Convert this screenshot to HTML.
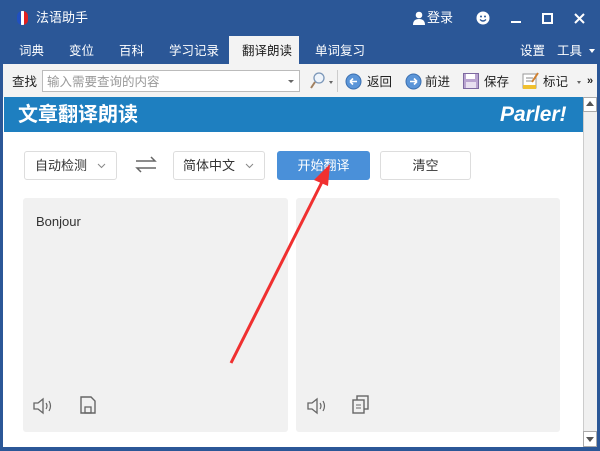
<!DOCTYPE html>
<html><head><meta charset="utf-8"><style>
*{margin:0;padding:0;box-sizing:border-box}
body{width:600px;height:451px;overflow:hidden;background:#2b5797;font-family:"Liberation Sans","Noto Sans CJK SC",sans-serif;position:relative}
.a{position:absolute}
.t{color:#fff;font-size:13px;line-height:16px}
.tab{position:absolute;top:38px;height:26px;line-height:26px;color:#fff;font-size:12.5px}
.tb{font-size:12.5px;color:#222;line-height:16px}
.btn{position:absolute;top:151px;height:29px;border:1px solid #ddd;border-radius:3px;background:#fff;font-size:13px;color:#333;line-height:27px}
.panel{position:absolute;top:198px;height:234px;background:#f1f1f1;border-radius:3px}
.chev{position:absolute;right:10px;top:11px}
</style></head><body>
<!-- title -->
<div class="a" style="left:17px;top:11px;width:11px;height:14px;border-radius:5px;overflow:hidden;display:flex"><div style="flex:1;background:#2050c0"></div><div style="flex:1;background:#fff"></div><div style="flex:1;background:#e02020"></div></div>
<div class="a t" style="left:36px;top:10px">法语助手</div>
<svg class="a" style="left:412px;top:11px" width="14" height="14"><circle cx="7" cy="4" r="3.3" fill="#fff"/><path d="M1 14 Q1 8 7 8 Q13 8 13 14Z" fill="#fff"/></svg>
<div class="a t" style="left:427px;top:10px">登录</div>
<svg class="a" style="left:476px;top:11px" width="14" height="14"><circle cx="7" cy="7" r="6.5" fill="#fff"/><circle cx="5" cy="5.5" r="1" fill="#2b5797"/><circle cx="9" cy="5.5" r="1" fill="#2b5797"/><path d="M4 8.5 Q7 11.5 10 8.5" stroke="#2b5797" stroke-width="1.3" fill="none"/></svg>
<div class="a" style="left:511px;top:21px;width:10px;height:2px;background:#fff"></div>
<div class="a" style="left:542px;top:13px;width:11px;height:11px;border:2px solid #fff"></div>
<svg class="a" style="left:574px;top:13px" width="11" height="11"><path d="M1 1L10 10M10 1L1 10" stroke="#fff" stroke-width="2"/></svg>
<!-- tabs -->
<div class="tab" style="left:19px">词典</div>
<div class="tab" style="left:69px">变位</div>
<div class="tab" style="left:119px">百科</div>
<div class="tab" style="left:169px">学习记录</div>
<div class="a" style="left:229px;top:36px;width:70px;height:30px;background:#f3f3f3"></div>
<div class="tab" style="left:242px;color:#222">翻译朗读</div>
<div class="tab" style="left:315px">单词复习</div>
<div class="tab" style="left:520px">设置</div>
<div class="tab" style="left:557px">工具</div>
<div class="a" style="left:589px;top:49px;border:3px solid transparent;border-top:4px solid #fff"></div>
<!-- toolbar -->
<div class="a" style="left:3px;top:64px;width:594px;height:33px;background:#f3f3f3"></div>
<div class="a tb" style="left:12px;top:74px">查找</div>
<div class="a" style="left:42px;top:70px;width:258px;height:22px;background:#fff;border:1px solid #bbb"></div>
<div class="a" style="left:47px;top:74px;font-size:12.5px;line-height:16px;color:#999">输入需要查询的内容</div>
<div class="a" style="left:288px;top:80px;border:3px solid transparent;border-top:3px solid #666"></div>
<svg class="a" style="left:310px;top:72px" width="16" height="18"><circle cx="9" cy="6" r="5" fill="#eef4fb" stroke="#7a96b8" stroke-width="1.3"/><path d="M5 10L1 16" stroke="#a08060" stroke-width="2"/></svg>
<div class="a" style="left:329px;top:81px;border:2.5px solid transparent;border-top:3px solid #666"></div>
<div class="a" style="left:337px;top:70px;width:1px;height:22px;background:#ccc"></div>
<svg class="a" style="left:345px;top:73px" width="17" height="17"><circle cx="8.5" cy="8.5" r="7.5" fill="#5b95d8" stroke="#3a6fb0"/><path d="M5 8.5H12M5 8.5L8 5.5M5 8.5L8 11.5" stroke="#fff" stroke-width="1.6" fill="none"/></svg>
<div class="a tb" style="left:367px;top:74px">返回</div>
<svg class="a" style="left:405px;top:73px" width="17" height="17"><circle cx="8.5" cy="8.5" r="7.5" fill="#5b95d8" stroke="#3a6fb0"/><path d="M5 8.5H12M12 8.5L9 5.5M12 8.5L9 11.5" stroke="#fff" stroke-width="1.6" fill="none"/></svg>
<div class="a tb" style="left:425px;top:74px">前进</div>
<svg class="a" style="left:463px;top:73px" width="16" height="16"><rect x="0.5" y="0.5" width="15" height="15" fill="#b9a4d0" stroke="#7d69a0"/><rect x="3" y="1" width="9" height="5" fill="#fff"/><rect x="3" y="9" width="10" height="6" fill="#e8e0f0"/></svg>
<div class="a tb" style="left:484px;top:74px">保存</div>
<svg class="a" style="left:522px;top:72px" width="18" height="18"><rect x="1" y="2" width="13" height="14" fill="#fff" stroke="#999"/><rect x="1" y="13" width="13" height="4" fill="#f0c030"/><path d="M4 6H11M4 9H10" stroke="#888"/><path d="M16 1L10 10" stroke="#d08030" stroke-width="2"/></svg>
<div class="a tb" style="left:543px;top:74px">标记</div>
<div class="a" style="left:577px;top:81px;border:2.5px solid transparent;border-top:3px solid #666"></div>
<div class="a" style="left:587px;top:75px;font-size:11px;line-height:12px;font-weight:bold;color:#222">»</div>
<!-- content -->
<div class="a" style="left:3px;top:97px;width:594px;height:350px;background:#fff"></div>
<div class="a" style="left:4px;top:97px;width:579px;height:35px;background:#1e7fc0"></div>
<div class="a" style="left:18px;top:105px;color:#fff;font-size:20px;line-height:20px;font-weight:bold">文章翻译朗读</div>
<div class="a" style="left:500px;top:104px;color:#fff;font-size:21px;line-height:22px;font-weight:bold;font-style:italic">Parler!</div>
<div class="a" style="left:583px;top:97px;width:14px;height:350px;background:#f0f0f0;border-left:1px solid #ccc"></div>
<div class="a" style="left:583px;top:97px;width:14px;height:15px;background:#fff;border:1px solid #aaa"></div>
<div class="a" style="left:586px;top:101px;border:4px solid transparent;border-bottom:5px solid #555;border-top:0"></div>
<div class="a" style="left:583px;top:431px;width:14px;height:16px;background:#fff;border:1px solid #aaa"></div>
<div class="a" style="left:586px;top:437px;border:4px solid transparent;border-top:5px solid #555;border-bottom:0"></div>
<div class="btn" style="left:24px;width:93px;padding-left:10px">自动检测<svg class="chev" width="9" height="6"><path d="M1 1L4.5 4.5L8 1" stroke="#888" fill="none"/></svg></div>
<svg class="a" style="left:134px;top:155px" width="24" height="20"><path d="M2 6H21L17 2M22 13H3L7 17" stroke="#666" stroke-width="1.5" fill="none"/></svg>
<div class="btn" style="left:173px;width:92px;padding-left:9px">简体中文<svg class="chev" width="9" height="6"><path d="M1 1L4.5 4.5L8 1" stroke="#888" fill="none"/></svg></div>
<div class="btn" style="left:277px;width:93px;background:#4a90d9;border-color:#4a90d9;color:#fff;text-align:center">开始翻译</div>
<div class="btn" style="left:380px;width:91px;text-align:center">清空</div>
<div class="panel" style="left:23px;width:265px"></div>
<div class="panel" style="left:296px;width:264px"></div>
<div class="a" style="left:36px;top:214px;font-size:13px;color:#333">Bonjour</div>
<svg class="a" style="left:33px;top:397px" width="20" height="18"><path d="M1 6H5L10 2V16L5 12H1Z" fill="none" stroke="#666" stroke-width="1.3"/><path d="M13 6Q15 9 13 12M16 4Q19 9 16 14" fill="none" stroke="#666" stroke-width="1.2"/></svg>
<svg class="a" style="left:80px;top:396px" width="16" height="18"><path d="M1 1H11L15 5V17H1Z" fill="none" stroke="#666" stroke-width="1.4"/><rect x="5" y="11" width="6" height="6" fill="none" stroke="#666" stroke-width="1.3"/></svg>
<svg class="a" style="left:307px;top:397px" width="20" height="18"><path d="M1 6H5L10 2V16L5 12H1Z" fill="none" stroke="#666" stroke-width="1.3"/><path d="M13 6Q15 9 13 12M16 4Q19 9 16 14" fill="none" stroke="#666" stroke-width="1.2"/></svg>
<svg class="a" style="left:352px;top:395px" width="18" height="20"><rect x="5" y="1" width="11" height="13" fill="#f1f1f1" stroke="#666" stroke-width="1.4"/><rect x="1" y="5" width="11" height="13" fill="#f1f1f1" stroke="#666" stroke-width="1.4"/><path d="M4 10H9M4 13H9" stroke="#666"/></svg>
<!-- red arrow -->
<svg class="a" style="left:0;top:0" width="600" height="451"><path d="M231 363L322 182" stroke="#f03030" stroke-width="3"/><path d="M330 164L314 180L328 186Z" fill="#f03030"/></svg>
</body></html>
